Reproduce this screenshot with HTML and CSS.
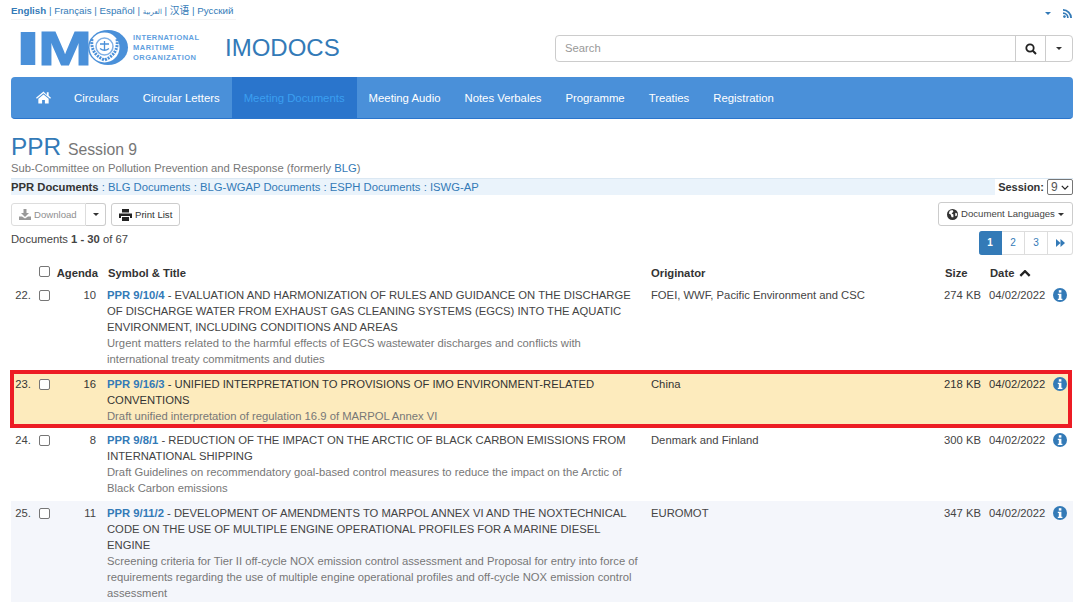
FILE: index.html
```html
<!DOCTYPE html>
<html lang="en">
<head>
<meta charset="utf-8">
<title>IMODOCS</title>
<link rel="stylesheet" href="styles.css">
</head>
<body>
<div class="page">
  <div class="topline">
    <div class="langs"><b>English</b> | <a>Français</a> | <a>Español</a> | <a class="ar">العربية</a> | <a class="cjk">汉语</a> | <a>Русский</a></div>
    <div class="toptools">
      <span class="caret small"></span>
      <svg class="rss" viewBox="0 0 10 10"><circle cx="1.6" cy="8.4" r="1.5"/><path d="M0 3.6a6.4 6.4 0 0 1 6.4 6.4H4.5A4.5 4.5 0 0 0 0 5.5zM0 0a10 10 0 0 1 10 10H8A8 8 0 0 0 0 2z"/></svg>
    </div>
  </div>
  <header class="brand">
    <svg class="logo" viewBox="-8 0 188 38" aria-label="IMO">
      <text class="logo-im" x="-6" y="36" textLength="28" lengthAdjust="spacingAndGlyphs">I</text>
      <text class="logo-im thick" x="18" y="36" textLength="54" lengthAdjust="spacingAndGlyphs">M</text>
      <ellipse cx="88" cy="18.500" rx="20" ry="17.500" fill="#4a90d9"/>
      <circle cx="84.500" cy="18.500" r="15" fill="#fff"/>
      <circle cx="84.500" cy="17.500" r="8.500" fill="none" stroke="#7fb0e6" stroke-width="1.500"/>
      <path d="M84.500 12v10M80 15h9M80 19.500q4.500 3.500 9 0" stroke="#4a90d9" stroke-width="1.300" fill="none"/>
      <path d="M72 10q-2 15 12.500 21q14.500-6 12.500-21" stroke="#4a90d9" stroke-width="3" fill="none" stroke-dasharray="2 1"/>
      <text class="logo-t" x="113" y="11" textLength="66">INTERNATIONAL</text>
      <text class="logo-t" x="113" y="21" textLength="41">MARITIME</text>
      <text class="logo-t" x="113" y="31" textLength="63">ORGANIZATION</text>
    </svg>
    <a class="appname">IMODOCS</a>
    <div class="search">
      <div class="search-input">Search</div>
      <div class="search-btn">
        <svg class="ico-search" viewBox="0 0 12 12"><circle cx="5" cy="5" r="3.7" fill="none" stroke="#222" stroke-width="1.8"/><path d="M7.800 7.800 11 11" stroke="#222" stroke-width="2"/></svg>
      </div>
      <div class="search-btn narrow"><span class="caret dark"></span></div>
    </div>
  </header>
  <nav class="nav">
    <a class="nav-home"><svg class="ico-home" viewBox="0 0 16 13"><path d="M8 0 0 6.800l.9 1L8 1.900l7.100 5.900.9-1-2.500-2.100V1h-2v2.900z"/><path d="M8 3.200 2.500 7.800V13h4V9.200h3V13h4V7.800z"/></svg></a>
    <a>Circulars</a>
    <a>Circular Letters</a>
    <a class="active">Meeting Documents</a>
    <a>Meeting Audio</a>
    <a>Notes Verbales</a>
    <a>Programme</a>
    <a>Treaties</a>
    <a>Registration</a>
  </nav>
  <h1 class="title"><span class="t-main">PPR</span> <small>Session 9</small></h1>
  <div class="subtitle">Sub-Committee on Pollution Prevention and Response (formerly <a>BLG</a>)</div>
  <div class="docbar">
    <div><b>PPR Documents</b> <span class="sep">:</span> <a>BLG Documents</a> <span class="sep">:</span> <a>BLG-WGAP Documents</a> <span class="sep">:</span> <a>ESPH Documents</a> <span class="sep">:</span> <a>ISWG-AP</a></div>
    <div class="session"><b>Session:</b><span class="select">9<svg class="chev" viewBox="0 0 10 6"><path d="M1 1l4 4 4-4" fill="none" stroke="#222" stroke-width="1.600"/></svg></span></div>
  </div>
  <div class="tools">
    <div class="tools-left">
      <div class="btn-group">
        <span class="btn disabled"><svg class="ico-dl" viewBox="0 0 12 11"><path d="M4.500 0h3v4H10L6 8 2 4h2.500z"/><path d="M0 7.500h3L6 9.500l3-2h3V11H0z"/></svg>Download</span>
        <span class="btn split"><span class="caret dark"></span></span>
      </div>
      <span class="btn"><svg class="ico-print" viewBox="0 0 13 12"><path d="M3 0h7v3.500H3zM0 4.500h13V9h-2V7H2v2H0zM3 8h7v4H3z" fill="#222"/></svg>Print List</span>
    </div>
    <span class="btn langs-btn"><svg class="ico-globe" viewBox="0 0 12 12"><circle cx="6" cy="6" r="6" fill="#333"/><path d="M3 2l3-1 1 2-2 2 2 1v3L5 9 4 6 2 5zM9 4l2 1v2l-2 1z" fill="#fff"/></svg>Document Languages<span class="caret dark"></span></span>
  </div>
  <div class="pager-row">
    <div class="count">Documents <b>1 - 30</b> of 67</div>
    <div class="pager">
      <a class="on">1</a><a>2</a><a>3</a><a class="last"><svg class="ico-ff" viewBox="0 0 9 8"><path d="M0 0l4.500 4L0 8zM4.500 0 9 4 4.500 8z"/></svg></a>
    </div>
  </div>
  <div class="list">
    <div class="row head">
      <span></span>
      <span class="c-check"><span class="cb"></span></span>
      <span class="c-agenda">Agenda</span>
      <span class="c-head-title">Symbol &amp; Title</span>
      <span>Originator</span>
      <span class="c-size">Size</span>
      <span class="c-head-date">Date <svg class="chev-up" viewBox="0 0 10 6"><path d="M1 5l4-4 4 4" fill="none" stroke="#222" stroke-width="2"/></svg></span>
      <span></span>
    </div>
    <div class="row">
      <span class="c-num">22.</span><span class="c-check"><span class="cb"></span></span><span class="c-agenda">10</span>
      <div class="c-title"><a>PPR 9/10/4</a> - EVALUATION AND HARMONIZATION OF RULES AND GUIDANCE ON THE DISCHARGE OF DISCHARGE WATER FROM EXHAUST GAS CLEANING SYSTEMS (EGCS) INTO THE AQUATIC ENVIRONMENT, INCLUDING CONDITIONS AND AREAS<p>Urgent matters related to the harmful effects of EGCS wastewater discharges and conflicts with international treaty commitments and duties</p></div>
      <span>FOEI, WWF, Pacific Environment and CSC</span><span class="c-size">274 KB</span><span>04/02/2022</span>
      <svg class="ico-info" viewBox="0 0 14 14"><circle cx="7" cy="7" r="7"/><rect x="5.800" y="2.200" width="2.600" height="2.400" fill="#fff"/><path d="M4.800 5.700h3.600v5h1v1.300H4.800v-1.300h1v-3.700h-1z" fill="#fff"/></svg>
    </div>
    <div class="row marked">
      <span class="c-num">23.</span><span class="c-check"><span class="cb"></span></span><span class="c-agenda">16</span>
      <div class="c-title"><a>PPR 9/16/3</a> - UNIFIED INTERPRETATION TO PROVISIONS OF IMO ENVIRONMENT-RELATED CONVENTIONS<p>Draft unified interpretation of regulation 16.9 of MARPOL Annex VI</p></div>
      <span>China</span><span class="c-size">218 KB</span><span>04/02/2022</span>
      <svg class="ico-info" viewBox="0 0 14 14"><circle cx="7" cy="7" r="7"/><rect x="5.800" y="2.200" width="2.600" height="2.400" fill="#fff"/><path d="M4.800 5.700h3.600v5h1v1.300H4.800v-1.300h1v-3.700h-1z" fill="#fff"/></svg>
    </div>
    <div class="row tall">
      <span class="c-num">24.</span><span class="c-check"><span class="cb"></span></span><span class="c-agenda">8</span>
      <div class="c-title"><a>PPR 9/8/1</a> - REDUCTION OF THE IMPACT ON THE ARCTIC OF BLACK CARBON EMISSIONS FROM INTERNATIONAL SHIPPING<p>Draft Guidelines on recommendatory goal-based control measures to reduce the impact on the Arctic of Black Carbon emissions</p></div>
      <span>Denmark and Finland</span><span class="c-size">300 KB</span><span>04/02/2022</span>
      <svg class="ico-info" viewBox="0 0 14 14"><circle cx="7" cy="7" r="7"/><rect x="5.800" y="2.200" width="2.600" height="2.400" fill="#fff"/><path d="M4.800 5.700h3.600v5h1v1.300H4.800v-1.300h1v-3.700h-1z" fill="#fff"/></svg>
    </div>
    <div class="row striped">
      <span class="c-num">25.</span><span class="c-check"><span class="cb"></span></span><span class="c-agenda">11</span>
      <div class="c-title"><a>PPR 9/11/2</a> - DEVELOPMENT OF AMENDMENTS TO MARPOL ANNEX VI AND THE NOXTECHNICAL CODE ON THE USE OF MULTIPLE ENGINE OPERATIONAL PROFILES FOR A MARINE DIESEL ENGINE<p>Screening criteria for Tier II off-cycle NOX emission control assessment and Proposal for entry into force of requirements regarding the use of multiple engine operational profiles and off-cycle NOX emission control assessment</p></div>
      <span>EUROMOT</span><span class="c-size">347 KB</span><span>04/02/2022</span>
      <svg class="ico-info" viewBox="0 0 14 14"><circle cx="7" cy="7" r="7"/><rect x="5.800" y="2.200" width="2.600" height="2.400" fill="#fff"/><path d="M4.800 5.700h3.600v5h1v1.300H4.800v-1.300h1v-3.700h-1z" fill="#fff"/></svg>
    </div>
  </div>
</div>
</body>
</html>
```
FILE: styles.css
```css
* { box-sizing: border-box; }
html, body { margin: 0; height: 602px; overflow: hidden; background: #fff; }
body { font: 11.25px/16px "Liberation Sans", Arial, sans-serif; color: #333; }
a { color: #337ab7; text-decoration: none; }
b { font-weight: 700; }
svg { display: block; flex: none; }
.page { padding: 0 7px 0 11px; }

.topline { display: flex; justify-content: space-between; height: 29px; padding-top: 3px; }
.langs { font-size: 9.750px; line-height: 14px; color: #337ab7; padding-right: 3px; box-shadow: 0 1px 0 #f4f4f4; height: 16px; }
.langs b { color: #337ab7; }
.langs .ar { font-family: "DejaVu Sans", sans-serif; font-size: 7px; }
.langs .cjk { font-family: "Noto Sans CJK SC", sans-serif; }
.toptools { display: flex; align-items: center; gap: 12px; height: 16px; margin-top: 2px; padding-right: 1px; }
.rss { width: 9px; height: 9px; fill: #337ab7; }
.caret { display: block; width: 0; height: 0; border-style: solid; border-width: 4px 4px 0; border-color: #333 transparent transparent; }
.caret.small { border-width: 3px 3px 0; border-top-color: #337ab7; }
.caret.dark { border-width: 3.500px 3.500px 0; border-top-color: #333; }

.brand { display: flex; align-items: center; height: 38px; padding-left: 1px; }
.logo { width: 188px; height: 38px; overflow: visible; }
.logo-im { font: 700 49px "Liberation Sans", sans-serif; fill: #4a90d9; }
.logo-im.thick { stroke: #4a90d9; stroke-width: 1.200px; }
.logo-t { font: 700 7.500px "Liberation Sans", sans-serif; fill: #5f9fe0; }
.appname { font-size: 24px; line-height: 30px; margin-left: 25px; }
.search { display: flex; margin-left: auto; width: 518px; height: 27px; border: 1px solid #ccc; border-radius: 4px; margin-top: 1px; }
.search-input { flex: 1; line-height: 25px; padding-left: 9px; color: #999; }
.search-btn { display: flex; align-items: center; justify-content: center; width: 30px; border-left: 1px solid #ccc; }
.search-btn.narrow { width: 27px; }
.ico-search { width: 12px; height: 12px; }

.nav { display: flex; margin-top: 10px; height: 42px; padding-left: 13px; background: #4a90d9; border-radius: 4px; border-bottom: 1px solid #2a75cc; }
.nav a { padding: 1px 12px 0; font-size: 11.350px; line-height: 41px; color: #fff; white-space: nowrap; }
.nav a.active { background: #2a75cc; color: #3b9ff0; }
.nav a.nav-home { display: flex; align-items: center; padding: 0 11px 0 12px; }
.ico-home { width: 15px; height: 13px; fill: #fff; }

.title { margin: 15px 0 0; font-weight: 400; font-size: 24.375px; line-height: 26px; }
.t-main { color: #337ab7; }
.title small { font-size: 15.750px; color: #777; }
.subtitle { line-height: 14px; color: #777; margin-top: -2px; }
.docbar { display: flex; justify-content: space-between; align-items: center; height: 17px; margin-top: 3px; background: #eaf3fb; border-top: 1px solid #dbe8f3; line-height: 16px; }
.docbar b { color: #333; }
.sep { color: #337ab7; }
.session { display: flex; align-items: center; gap: 3px; background: #fff; padding-left: 3px; height: 16px; font-size: 11px; }
.select { display: flex; align-items: center; gap: 3px; height: 16px; width: 26px; border: 1px solid #767676; border-radius: 2px; padding-left: 3px; font-size: 12px; color: #555; background: #fff; }
.chev { width: 8px; height: 5px; }

.tools { display: flex; justify-content: space-between; margin-top: 7px; }
.tools-left { display: flex; gap: 5px; padding-top: 1px; }
.btn-group { display: flex; }
.btn { display: flex; align-items: center; gap: 3px; height: 23px; padding: 0 7px; border: 1px solid #ccc; border-radius: 3px; font-size: 9.600px; color: #333; white-space: nowrap; }
.btn.disabled { width: 75px; color: #8f8f8f; border-color: #ddd; border-radius: 3px 0 0 3px; }
.btn.split { width: 20px; justify-content: center; padding: 0; border-left: 0; border-radius: 0 3px 3px 0; }
.ico-dl { width: 12px; height: 11px; fill: #999; }
.ico-print { width: 13px; height: 12px; }
.langs-btn { width: 135px; height: 24px; padding: 0 7px 0 8px; color: #444; }
.ico-globe { width: 11px; height: 11px; }

.pager-row { display: flex; justify-content: space-between; margin-top: 5px; height: 24px; }
.count { line-height: 16px; color: #444; }
.pager { display: flex; font-size: 10px; }
.pager a { display: flex; align-items: center; justify-content: center; width: 23px; height: 24px; border: 1px solid #ddd; border-left: 0; }
.pager a.on { background: #337ab7; border-color: #337ab7; color: #fff; font-weight: 700; border-radius: 3px 0 0 3px; }
.pager a.last { width: 25px; border-radius: 0 3px 3px 0; }
.ico-ff { width: 9px; height: 8px; fill: #337ab7; }

.list { margin-top: 9px; }
.row { display: grid; grid-template-columns: 20px 20px 45px 555px 276px 62px 64px 1fr; padding: 4px 0; line-height: 16px; color: #444; }
.row > span { white-space: nowrap; }
.row.head { font-weight: 700; color: #333; height: 19px; padding: 1px 0 0; }
.c-num { text-align: right; }
.c-check { padding-left: 8px; }
.cb { display: block; width: 11px; height: 11px; margin-top: 3px; border: 1px solid #767676; border-radius: 2px; background: #fff; }
.head .cb { margin-top: 1px; }
.c-agenda { text-align: right; }
.head .c-agenda { margin-right: -2px; margin-left: -3px; }
.c-head-title { padding-left: 12px; }
.c-head-date { padding-left: 1px; }
.c-title { padding: 0 11px; }
.c-title a { font-weight: 700; }
.c-title p { margin: 0; color: #777; }
.c-size { text-align: right; padding-right: 8px; }
.head .c-size { text-align: left; padding: 0 0 0 18px; }
.chev-up { display: inline-block; width: 12px; height: 7px; margin-left: 1px; vertical-align: 0; }
.ico-info { width: 14px; height: 14px; fill: #337ab7; margin-top: 1px; }
.row.marked { background: #fdebbd; outline: 4px solid #ed1c24; outline-offset: -4px; height: 58px; margin: -1px 1px 0 -1px; padding: 6px 0 0 1px; color: #333; }
.row.tall { padding-bottom: 5px; }
.row.striped { background: #f4f6fb; }
```
